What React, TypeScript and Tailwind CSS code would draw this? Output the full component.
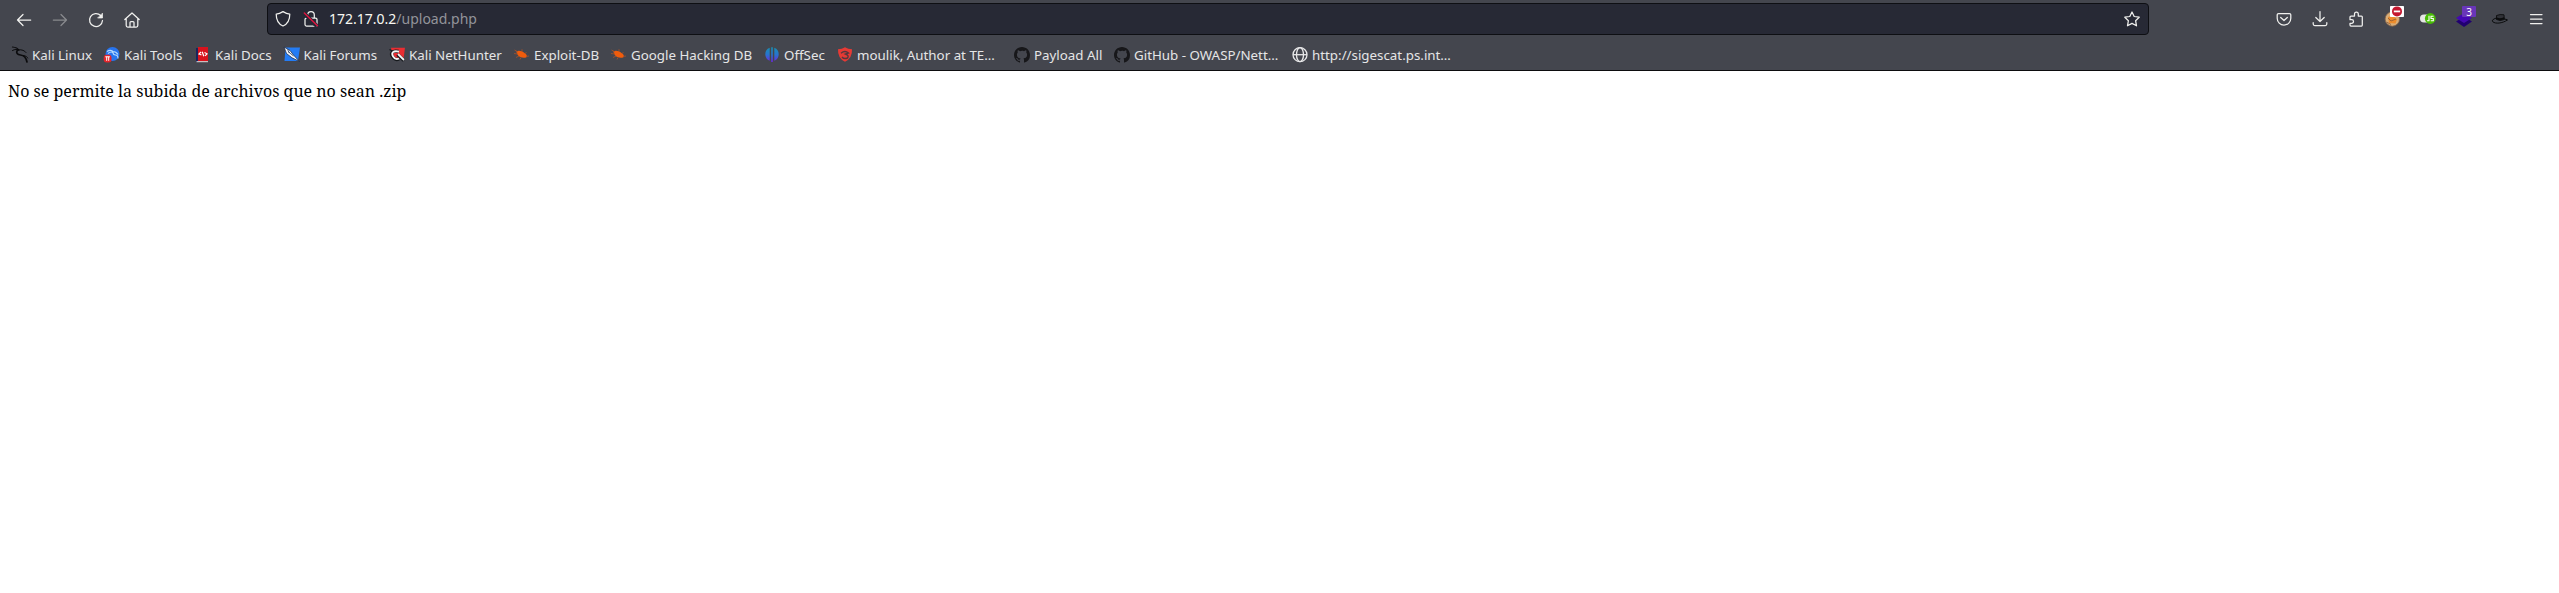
import React from "react";

type P = { children?: React.ReactNode; className?: string };

function Glyph({ children, className = "" }: P) {
  return (
    <svg viewBox="0 0 16 16" className={`h-4 w-4 shrink-0 overflow-visible ${className}`} fill="none" stroke="#f0f0ee" strokeWidth="1.25" strokeLinecap="round" strokeLinejoin="round">
      {children}
    </svg>
  );
}

function ToolButton({ children, label }: { children: React.ReactNode; label: string }) {
  return (
    <button aria-label={label} className="flex h-10 w-9 shrink-0 items-center justify-center">
      {children}
    </button>
  );
}

function Favicon({ children }: P) {
  return (
    <svg viewBox="0 0 16 16" className="h-4 w-4 shrink-0 overflow-visible" fill="none">
      {children}
    </svg>
  );
}

const dragon = (
  <g stroke="#0b0b0d" strokeLinecap="round" fill="none">
    <path d="M.5 0C3 .3 5.500 .8 6.500 2.800" strokeWidth="1.200" />
    <path d="M.5 3.500C3 2 5 2.300 7 3.300" strokeWidth="1" />
    <path d="M6.500 2.800C10 2.500 12.500 3.500 14 5.500" strokeWidth="1" />
    <path d="M5.500 3C3.500 6 5.500 7.800 8.500 8C12 8.300 14 10 15 15" strokeWidth="1.700" />
    <path d="M11.500 8.500C14 9 15.500 10 15.800 11" strokeWidth="1" />
  </g>
);

const tools = (
  <>
    <circle cx="8.500" cy="7" r="7" fill="#2874ee" />
    <path d="M3 4.500Q7 2 9.500 5M4 6.500Q7 4 9 5.500Q9 8 11.500 8T14 11.500M9 4.500Q12 4.500 14 7.500" stroke="#b9dcff" strokeWidth="1.100" />
    <rect x="-.3" y="7.700" width="7.800" height="7.800" rx="3" fill="#e5252b" />
    <path d="M1.300 9.800h4.600M2.700 9.800v4M4.700 9.800v4" stroke="#fff" strokeWidth="1" />
  </>
);

const docs = (
  <>
    <path d="M1 1h2.500v14H1z" fill="#18245c" />
    <path d="M3 0H13v14H3z" fill="#d8131d" />
    <path d="M1.500 14.700H13" stroke="#e8dcdc" />
    <path d="M6 5L4 7L6.500 8M7.200 4.700L8.800 9.200M9.500 5.500L12 6.800L10 8.800" stroke="#fff" strokeWidth="1.200" />
  </>
);

const forums = (
  <>
    <path d="M1.500 .5H16L14 14H.5z" fill="#247cf4" />
    <path d="M0 0L6 3.500L9.500 8L15.500 14.500L8 10.800L2.500 6.500z" fill="#f4f7fb" stroke="#152440" strokeWidth=".7" />
    <path d="M4 4.500L9.500 9M3.500 2.500L5.500 6" stroke="#182a48" strokeWidth=".7" />
  </>
);

const netHunter = (
  <>
    <path d="M2 .7H16L14.500 12H4z" fill="#e92d32" />
    <path d="M9.500 4.500C3.500 3 1.200 6 3.500 9.500C5 12 7.500 13 10 12M8.500 7.500L15 13.500" stroke="#15181b" strokeWidth="3.400" />
    <path d="M.5 2.500L4.500 4.800" stroke="#15181b" strokeWidth="1.200" />
    <path d="M10 4.700C4 3.200 2 6 4 9.300C5.300 11.700 7.500 12.500 10 11.500M9 7L15 13" stroke="#f6f6f6" strokeWidth="1.800" />
  </>
);

const bug = (
  <>
    <path d="M2.200 4.500C4.500 3.200 8 3.800 10.500 6C12.500 7.200 13.500 9 12.500 10.300C9.500 11.500 5.500 10.500 3.800 8z" fill="#f05c0c" />
    <path d="M4 5L.5 3M4 7L0 6.500M5 9L2 10.500M7 10.500L6 12.500M8 4.500L8 2.200M11 6.500L12.500 5.500M12 9.500L15 9" stroke="#a95228" strokeWidth=".8" />
  </>
);

const offsec = (
  <>
    <defs>
      <linearGradient id="offsec" x1="0" y1="0" x2="0" y2="1">
        <stop offset="0" stopColor="#1790b4" />
        <stop offset=".5" stopColor="#2874cf" />
        <stop offset="1" stopColor="#6c25df" />
      </linearGradient>
    </defs>
    <path d="M5.700 .8V13.800A7 7 0 0 1 5.700 .8zM7.200 .3H8.800V15H7.200zM10.300 .8V13.800A7 7 0 0 0 10.300 .8z" fill="url(#offsec)" />
  </>
);

const shieldRed = (
  <>
    <path d="M1 2.200Q5 2.200 8 .2Q11 2.200 15 2.200Q15.500 11 8 14.700Q.5 11 1 2.200z" fill="#e63a35" />
    <path d="M4 6.200Q8 3 11.500 6L8.500 7Q12.500 8.500 10.500 11Q7 12.500 5 10" stroke="#54383e" strokeWidth="1.400" />
  </>
);

const github = (
  <path fill="#17171a" d="M8 0C3.580 0 0 3.580 0 8c0 3.540 2.290 6.530 5.470 7.590.4.070.55-.17.55-.38v-1.490c-2.010.37-2.530-.49-2.690-.94-.09-.23-.48-.94-.82-1.130-.28-.15-.68-.52-.01-.53.63-.01 1.080.58 1.230.82.72 1.210 1.870.87 2.330.66.070-.52.28-.87.51-1.070-1.780-.2-3.640-.89-3.640-3.950 0-.87.31-1.590.82-2.150-.08-.2-.36-1.020.08-2.120 0 0 .67-.21 2.200.82A7.500 7.500 0 0 1 8 3.860c.68 0 1.360.09 2 .27 1.530-1.040 2.200-.82 2.200-.82.44 1.100.16 1.920.08 2.120.51.56.82 1.270.82 2.150 0 3.070-1.870 3.750-3.650 3.950.29.25.54.73.54 1.480v2.200c0 .21.150.46.55.38A8 8 0 0 0 16 8c0-4.420-3.580-8-8-8z" />
);

const globe = (
  <g stroke="#e8e8e9" strokeWidth="1.300">
    <circle cx="8" cy="7.700" r="7" />
    <ellipse cx="8" cy="7.700" rx="3.500" ry="7" />
    <path d="M1 7.700h14" />
  </g>
);

const bookmarks: { label: string; icon: React.ReactNode; width: string }[] = [
  { label: "Kali Linux", icon: dragon, width: "w-[92px]" },
  { label: "Kali Tools", icon: tools, width: "w-[91px]" },
  { label: "Kali Docs", icon: docs, width: "w-[88.5px]" },
  { label: "Kali Forums", icon: forums, width: "w-[105.500px]" },
  { label: "Kali NetHunter", icon: netHunter, width: "w-[125px]" },
  { label: "Exploit-DB", icon: bug, width: "w-[97px]" },
  { label: "Google Hacking DB", icon: bug, width: "w-[153px]" },
  { label: "OffSec", icon: offsec, width: "w-[73px]" },
  { label: "moulik, Author at TE…", icon: shieldRed, width: "w-[177px]" },
  { label: "Payload All", icon: github, width: "w-[100px]" },
  { label: "GitHub - OWASP/Nett…", icon: github, width: "w-[178px]" },
  { label: "http://sigescat.ps.int…", icon: globe, width: "w-[178px]" },
];

export default function App() {
  return (
    <div className="flex h-[593px] w-full flex-col overflow-hidden bg-white">
      <header className="flex h-[71px] shrink-0 flex-col border-b border-[#0c0c0e] bg-[#44464e] font-['Noto_Sans',sans-serif]">
        <nav className="flex h-[39px] items-center pl-[6px] pr-[5px]">
          <ToolButton label="Back">
            <Glyph><path d="M14.700 8H1.500M7 2.500L1.500 8L7 13.500" /></Glyph>
          </ToolButton>
          <ToolButton label="Forward">
            <Glyph className="opacity-40"><path d="M1.300 8h13.200M9 2.500L14.500 8L9 13.500" /></Glyph>
          </ToolButton>
          <ToolButton label="Reload">
            <Glyph>
              <path d="M12.700 3.500A6.500 6.500 0 1 0 14.500 8.500" />
              <path d="M14.500 1.500V6H10z" fill="#f0f0ee" strokeWidth=".7" />
            </Glyph>
          </ToolButton>
          <ToolButton label="Home">
            <Glyph className="-ml-px"><path d="M.8 7.500L8 1L15.200 7.500M2.200 6.500V13.500Q2.200 15 3.700 15H12.300Q13.800 15 13.800 13.500V6.500M6 15V10.500Q6 9.500 7 9.500H9Q10 9.500 10 10.500V15" /></Glyph>
          </ToolButton>
          <div className="mt-[-1px] ml-[117px] flex h-8 w-[1882px] items-center rounded border border-[#0e0f13] bg-[#272935] pr-2 pl-[7px]">
            <Glyph><path d="M8 .6Q11.500 2.800 14.800 3.100C14.800 8.800 12.500 13.300 8 15C3.500 13.300 1.200 8.800 1.200 3.100Q4.500 2.800 8 .6z" /></Glyph>
            <Glyph className="ml-3">
              <path d="M4.700 7V4a3.300 3.300 0 0 1 6.600 0V7M3.500 7H12.500Q14 7 14 8.500V13.500Q14 15 12.500 15H3.500Q2 15 2 13.500V8.500Q2 7 3.500 7z" />
              <path d="M2 3.200L13.800 15" stroke="#272935" strokeWidth="4" strokeLinecap="butt" />
              <path d="M1.300 2L14.500 14.800" stroke="#e2143f" strokeWidth="1.400" />
            </Glyph>
            <span className="ml-[10px] text-sm leading-5 whitespace-pre text-[#f8f8f2]">172.17.0.2<span className="text-[#93949a]">/upload.php</span></span>
            <Glyph className="ml-auto"><path d="M8 1L10.200 5.500L15.200 6.200L11.600 9.700L12.500 14.800L8 12.400L3.500 14.800L4.400 9.700L.8 6.200L5.800 5.500z" /></Glyph>
          </div>
          <div className="-mt-px ml-auto flex">
            <ToolButton label="Pocket">
              <Glyph><path d="M2.500 2.500h11Q14.800 2.500 14.800 3.800V7.300A6.800 6.800 0 0 1 1.200 7.300V3.800Q1.200 2.500 2.500 2.500zM4.700 6.500L8 9.500L11.300 6.500" /></Glyph>
            </ToolButton>
            <ToolButton label="Downloads">
              <Glyph><path d="M8 .5V10.500M3.800 6.500L8 10.500L12.200 6.500M1.200 11.500V13Q1.200 14.500 2.700 14.500H13.300Q14.800 14.500 14.800 13V11.500" /></Glyph>
            </ToolButton>
            <ToolButton label="Extensions">
              <Glyph><path d="M2 8.700V6Q2 5 3 5H6.500V3A1.900 1.900 0 0 1 10.300 3V5H13.500Q14.300 5 14.300 6V14Q14.300 15 13.500 15H3Q2 15 2 14V12.300H3.700A1.800 1.800 0 0 0 3.700 8.700z" /></Glyph>
            </ToolButton>
            <ToolButton label="Cookies">
              <Favicon>
                <circle cx="8.300" cy="8" r="7.200" fill="#d8ad77" stroke="#85644b" strokeWidth=".8" />
                <path d="M4 6L9 4.500L13 8.500L11.500 12.500L5 12z" fill="#ed8c2c" />
                <path d="M4 7L7 10L12 8M2.500 11L7 13.500" stroke="#8c5b35" strokeWidth=".8" />
                <rect x="6" y="-5" width="14" height="11" rx=".7" fill="#fff" />
                <circle cx="13" cy=".4" r="5" fill="#c4172f" />
                <path d="M9.800 .4h6.400" stroke="#fff" strokeWidth="1.800" />
              </Favicon>
            </ToolButton>
            <ToolButton label="Scripts">
              <Favicon>
                <rect x="0" y="3.500" width="14" height="8" rx="4" fill="#e6e7e4" />
                <circle cx="10.300" cy="7.500" r="5.400" fill="#48bc05" />
                <path d="M9 4.800V9.700H6.900M13.600 5.300H11V7.500H13.300V9.700H10.700" stroke="#fff" strokeWidth="1.100" />
              </Favicon>
            </ToolButton>
            <ToolButton label="Analyzer">
              <span className="relative flex">
                <Favicon>
                  <path d="M0 10.500L8 5.500L16 10.500L8 16z" fill="#210070" />
                  <path d="M0 7L8 2L16 7L8 12z" fill="#4508b2" />
                </Favicon>
                <span className="absolute -top-[5px] left-[6px] flex h-[11px] w-[14px] items-center justify-center rounded-[1px] bg-[#6936b8] text-[10px] leading-none text-white">3</span>
              </span>
            </ToolButton>
            <ToolButton label="Hat">
              <Favicon>
                <path d="M4.500 4.500Q8 3 12 3.800L12.300 8.500Q8 10.500 4.500 8.500z" fill="#303137" stroke="#0b0c0d" strokeWidth=".9" />
                <path d="M4.500 7.300Q8 9.300 12.300 7" stroke="#0b0c0d" strokeWidth="1.800" />
                <path d="M4.300 7Q-1 8.800 .8 10.800C3.500 13 10 12.500 15.500 9Q14 7.800 12.500 8.300" stroke="#0b0c0d" strokeWidth="1" />
              </Favicon>
            </ToolButton>
            <ToolButton label="Menu">
              <Glyph><path d="M2.500 3.500h11.500M2.500 8h11.500M2.500 12.500h11.500" /></Glyph>
            </ToolButton>
          </div>
        </nav>
        <ul className="flex h-[31px] items-center pl-3">
          {bookmarks.map((b) => (
            <li key={b.label} className={`flex shrink-0 items-center gap-1 ${b.width}`}>
              <Favicon>{b.icon}</Favicon>
              <span className="text-[13.330px] leading-5 whitespace-nowrap text-[#e5e5e6]">{b.label}</span>
            </li>
          ))}
        </ul>
      </header>
      <main className="px-2 pt-[9px] font-['Noto_Serif','DejaVu_Serif',serif] text-base leading-[22px] text-black">
        No se permite la subida de archivos que no sean .zip
      </main>
    </div>
  );
}
